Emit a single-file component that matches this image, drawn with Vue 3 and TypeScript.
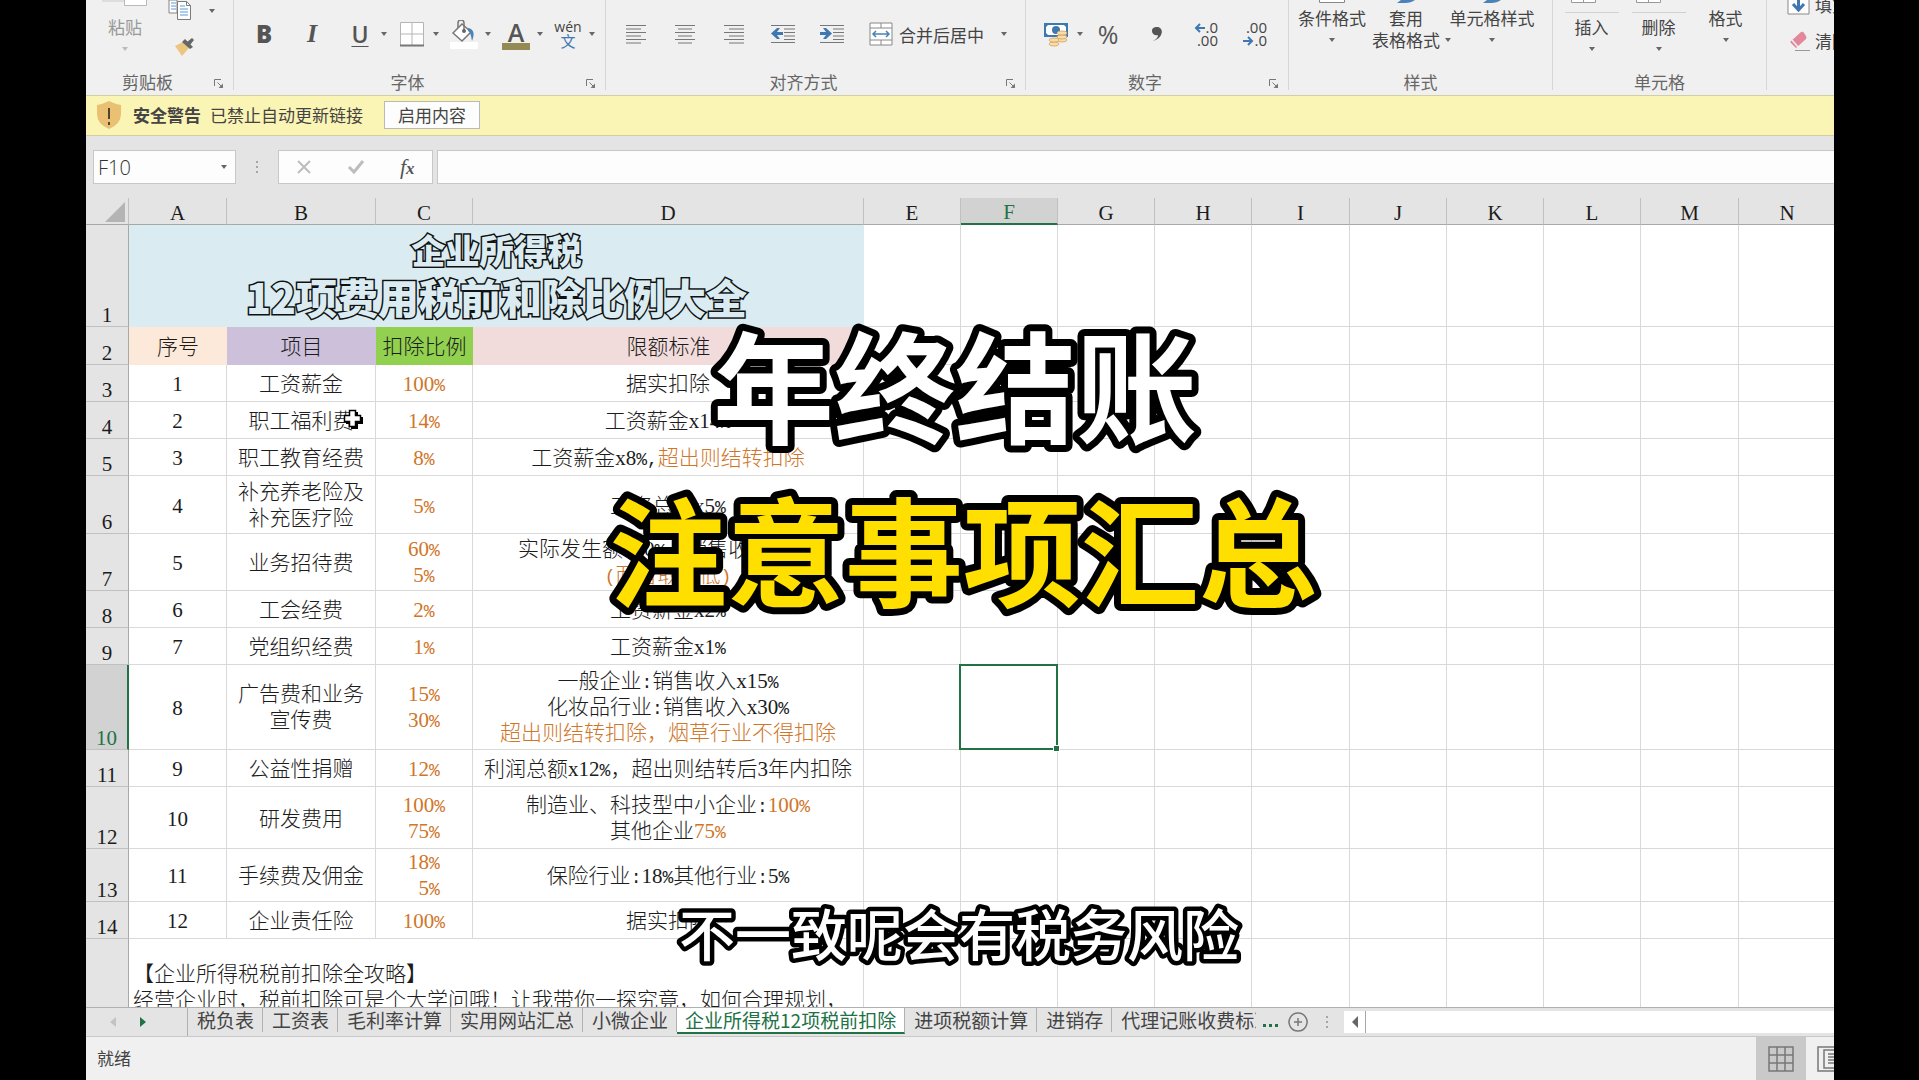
<script setup lang="ts">
import { ref } from 'vue'

interface Run { text: string; accent: boolean; half: boolean }
interface SheetRow { n: string; height: number; cells: string[] }

const columns = [
  { name: 'A', width: 98 }, { name: 'B', width: 149 }, { name: 'C', width: 97 }, { name: 'D', width: 391 },
  { name: 'E', width: 97 }, { name: 'F', width: 97 }, { name: 'G', width: 97 }, { name: 'H', width: 97 },
  { name: 'I', width: 98 }, { name: 'J', width: 97 }, { name: 'K', width: 97 }, { name: 'L', width: 97 },
  { name: 'M', width: 98 }, { name: 'N', width: 97 },
]
const freeColumns = columns.slice(4).map(c => c.name)

// Braces mark the accent-coloured part of a cell, a newline starts a new line.
const rows: SheetRow[] = [
  { n: '3', height: 37, cells: ['1', '工资薪金', '{100%}', '据实扣除'] },
  { n: '4', height: 37, cells: ['2', '职工福利费', '{14%}', '工资薪金x14%'] },
  { n: '5', height: 37, cells: ['3', '职工教育经费', '{8%}', '工资薪金x8%,{超出则结转扣除}'] },
  { n: '6', height: 58, cells: ['4', '补充养老险及\n补充医疗险', '{5%}', '工资总额x5%'] },
  { n: '7', height: 57, cells: ['5', '业务招待费', '{60%}\n{5%}', '实际发生额x60%，销售收入x0.5%\n{(两者取其低)}'] },
  { n: '8', height: 37, cells: ['6', '工会经费', '{2%}', '工资薪金x2%'] },
  { n: '9', height: 37, cells: ['7', '党组织经费', '{1%}', '工资薪金x1%'] },
  { n: '10', height: 85, cells: ['8', '广告费和业务\n宣传费', '{15%}\n{30%}', '一般企业:销售收入x15%\n化妆品行业:销售收入x30%\n{超出则结转扣除，烟草行业不得扣除}'] },
  { n: '11', height: 37, cells: ['9', '公益性捐赠', '{12%}', '利润总额x12%，超出则结转后3年内扣除'] },
  { n: '12', height: 62, cells: ['10', '研发费用', '{100%}\n{75%}', '制造业、科技型中小企业:{100%}\n其他企业{75%}'] },
  { n: '13', height: 53, cells: ['11', '手续费及佣金', '{18%}\n{\u20025%}', '保险行业:18%其他行业:5%'] },
  { n: '14', height: 37, cells: ['12', '企业责任险', '{100%}', '据实扣除'] },
]

function parse(cell: string): Run[][] {
  return cell.split('\n').map(line => {
    let accent = false
    const runs: Run[] = []
    for (const part of line.split(/([{}]|[%:,()]+)/)) {
      if (part === '{') accent = true
      else if (part === '}') accent = false
      else if (part) runs.push({ text: part, accent, half: /^[%:,()]/.test(part) })
    }
    return runs
  })
}

const tabs = ['税负表', '工资表', '毛利率计算', '实用网站汇总', '小微企业', '企业所得税12项税前扣除', '进项税额计算', '进销存', '代理记账收费标准']
const activeTab = ref('企业所得税12项税前扣除')
const cellName = ref('F10')
const formula = ref('')
</script>

<template>
  <div class="stage">
    <div class="app">
      <header class="ribbon">
        <section class="group clipboard">
          <div class="body">
            <button class="big paste">
              <svg class="stub" width="46" height="7" viewBox="0 0 46 7"><path d="M0 0H22V2H0z" fill="#ddd" /><path d="M22.500 0V5.500H44.500V0" fill="#fff" stroke="#b9b9b9" /></svg>
              <span class="low">粘贴</span><i class="caret"></i>
            </button>
            <div class="stack">
              <button class="mini" aria-label="复制">
                <svg width="24" height="22" viewBox="0 0 24 22"><path d="M1 0V13H9V0z" fill="#fff" stroke="#858585" /><path d="M3 3h5M3 6h5M3 9h5" stroke="#5b9bd5" /><path d="M9.500 1.500h9l4 4v14h-13z" fill="#fff" stroke="#7b7b7b" /><path d="M18.500 1.500v4h4" fill="none" stroke="#7b7b7b" /><path d="M12 6h5M12 9h8M12 12h8M12 15h8" stroke="#5b9bd5" /></svg>
                <i class="caret"></i>
              </button>
              <button class="mini brush" aria-label="格式刷">
                <svg width="22" height="20" viewBox="0 0 22 20"><path d="M2 9l8-4 6 6-7 8z" fill="#ebc67f" /><path d="M9 5l3-3 8 8-3 2z" fill="#666" /><path d="M14 5l5-4 2 2-4 5z" fill="#666" /></svg>
              </button>
            </div>
          </div>
          <footer><span>剪贴板</span><button class="launch" aria-label="剪贴板设置"><svg width="10" height="10" viewBox="0 0 10 10"><path d="M.5 7V.5H7M3.500 3.500L8 8" fill="none" stroke="#777" /><path d="M9 4.500V9H4.500z" fill="#777" /></svg></button></footer>
        </section>
        <section class="group font">
          <div class="body">
            <button class="tool wide"><b class="glyph">B</b></button>
            <button class="tool wide"><em class="glyph">I</em></button>
            <button class="split"><span class="pic"><u class="glyph">U</u></span><i class="caret"></i></button>
            <button class="split" aria-label="边框"><span class="pic"><svg width="24" height="25" viewBox="0 0 24 25"><path d="M.5.5h23v23H.5zM12 0v24M0 12h24" fill="#fff" stroke="#b5b5b5" /><path d="M0 23.500h24" stroke="#777" stroke-width="2" /></svg></span><i class="caret"></i></button>
            <button class="split" aria-label="填充颜色"><span class="pic"><svg width="30" height="29" viewBox="0 0 30 29"><path d="M1 22h28v7H1z" fill="#fff" /><path d="M4 13L13 4l9 8-9 9z" fill="#fff" stroke="#777" stroke-width="1.500" /><path d="M9 8V3a3 3 0 0 1 6 0v8" fill="none" stroke="#777" stroke-width="1.500" /><circle cx="15" cy="11" r="2" fill="#666" /><path d="M19 8c6 1 7 6 4 13-1-5-1-8-4-10z" fill="#4a83b8" /></svg></span><i class="caret"></i></button>
            <button class="split"><span class="pic color"><span>A</span></span><i class="caret"></i></button>
            <button class="split"><span class="pic pinyin"><span>wén</span><span class="zh">文</span></span><i class="caret"></i></button>
          </div>
          <footer><span>字体</span><button class="launch" aria-label="字体设置"><svg width="10" height="10" viewBox="0 0 10 10"><path d="M.5 7V.5H7M3.500 3.500L8 8" fill="none" stroke="#777" /><path d="M9 4.500V9H4.500z" fill="#777" /></svg></button></footer>
        </section>
        <section class="group align">
          <div class="body">
            <button class="tool" aria-label="左对齐"><svg width="20" height="20" viewBox="0 0 20 20"><path d="M0 1.500h20M0 5h15M0 8.500h20M0 12h15M0 15.500h20M0 19h15" stroke="#777" /></svg></button>
            <button class="tool" aria-label="居中"><svg width="20" height="20" viewBox="0 0 20 20"><path d="M0 1.500h20M3 5h14M0 8.500h20M3 12h14M0 15.500h20M3 19h14" stroke="#777" /></svg></button>
            <button class="tool" aria-label="右对齐"><svg width="20" height="20" viewBox="0 0 20 20"><path d="M0 1.500h20M5 5h15M0 8.500h20M5 12h15M0 15.500h20M5 19h15" stroke="#777" /></svg></button>
            <button class="tool" aria-label="减少缩进"><svg width="24" height="20" viewBox="0 0 24 20"><path d="M0 1.500h24M13 5h11M13 8.500h11M13 12h11M13 15.500h11M0 18.500h24" stroke="#777" /><path d="M6 4h3L6 8h6v3H6l3 4H6L0 9.500z" fill="#3f78b0" /></svg></button>
            <button class="tool" aria-label="增加缩进"><svg width="24" height="20" viewBox="0 0 24 20"><path d="M0 1.500h24M13 5h11M13 8.500h11M13 12h11M13 15.500h11M0 18.500h24" stroke="#777" /><path d="M6 4H3l3 4H0v3h6l-3 4h3l6-5.500z" fill="#3f78b0" /></svg></button>
            <button class="merge"><svg width="24" height="24" viewBox="0 0 24 24"><path d="M1 1h22v22H1z" fill="#fff" stroke="#888" /><path d="M1 6h22M1 18h22M12 1v5M12 18v5" stroke="#888" /><path d="M4 12h16M7 9l-3 3 3 3M17 9l3 3-3 3" fill="none" stroke="#4a83b8" stroke-width="1.500" /></svg><span>合并后居中</span><i class="caret"></i></button>
          </div>
          <footer><span>对齐方式</span><button class="launch" aria-label="对齐设置"><svg width="10" height="10" viewBox="0 0 10 10"><path d="M.5 7V.5H7M3.500 3.500L8 8" fill="none" stroke="#777" /><path d="M9 4.500V9H4.500z" fill="#777" /></svg></button></footer>
        </section>
        <section class="group number">
          <div class="body">
            <button class="split" aria-label="会计数字格式"><span class="pic"><svg width="24" height="25" viewBox="0 0 24 25"><path d="M1 2h22v12H1z" fill="#fff" stroke="#3f78b0" stroke-width="2" /><path d="M1 2h4L1 6zM23 2v4l-4-4zM1 14v-4l4 4z" fill="#3f78b0" /><circle cx="12" cy="8" r="4" fill="#3f78b0" /><g fill="#f7dcae" stroke="#dcae68"><ellipse cx="18" cy="18" rx="5" ry="2" /><ellipse cx="18" cy="15" rx="5" ry="2" /><ellipse cx="18" cy="11" rx="5" ry="2" /><ellipse cx="10" cy="22" rx="5" ry="2" /><ellipse cx="10" cy="18" rx="5" ry="2" /></g></svg></span><i class="caret"></i></button>
            <button class="tool percent">%</button>
            <button class="tool" aria-label="千位分隔样式"><svg width="12" height="16" viewBox="0 0 12 16"><path d="M2 15c4-2 5-4 5-6-3 1-6-1-6-4s2-4 5-4c7 0 7 11-4 14z" fill="#555" /></svg></button>
            <button class="tool decimals"><span><svg width="11" height="10" viewBox="0 0 11 10"><path d="M11 5H2M6 1L2 5l4 4" fill="none" stroke="#3f78b0" stroke-width="2" /></svg>.0</span><span>.00</span></button>
            <button class="tool decimals"><span>.00</span><span><svg width="11" height="10" viewBox="0 0 11 10"><path d="M0 5h9M5 1l4 4-4 4" fill="none" stroke="#3f78b0" stroke-width="2" /></svg>.0</span></button>
          </div>
          <footer><span>数字</span><button class="launch" aria-label="数字设置"><svg width="10" height="10" viewBox="0 0 10 10"><path d="M.5 7V.5H7M3.500 3.500L8 8" fill="none" stroke="#777" /><path d="M9 4.500V9H4.500z" fill="#777" /></svg></button></footer>
        </section>
        <section class="group styles">
          <div class="body">
            <button class="big"><svg class="stub" width="26" height="7" viewBox="0 0 26 7"><path d="M.5 0v2.500h25V0" fill="#fff" stroke="#888" /></svg><span>条件格式</span><i class="caret"></i></button>
            <button class="big"><svg class="stub" width="22" height="7" viewBox="0 0 22 7"><path d="M2 3l4-3h14q-4 3-10 3z" fill="#4a83b8" /></svg><span>套用</span><span class="inline">表格格式<i class="caret"></i></span></button>
            <button class="big"><svg class="stub" width="22" height="7" viewBox="0 0 22 7"><path d="M2 3l4-3h14q-4 3-10 3z" fill="#4a83b8" /></svg><span>单元格样式</span><i class="caret"></i></button>
          </div>
          <footer><span>样式</span></footer>
        </section>
        <section class="group cellsgroup">
          <div class="body">
            <button class="big"><svg class="stub" width="56" height="7" viewBox="0 0 56 7"><path d="M7.500 0v2.500h24V0M19.500 0v2" fill="#fff" stroke="#999" /></svg><span class="low ruled">插入</span><i class="caret"></i></button>
            <button class="big"><svg class="stub" width="56" height="7" viewBox="0 0 56 7"><path d="M5.500 0v2.500h24V0M17.500 0v2" fill="#fff" stroke="#999" /></svg><span class="low ruled">删除</span><i class="caret"></i></button>
            <button class="big"><span class="stub"></span><span>格式</span><i class="caret"></i></button>
          </div>
          <footer><span>单元格</span></footer>
        </section>
        <section class="group editing">
          <button class="row"><svg width="24" height="22" viewBox="0 0 24 22"><path d="M1 -2h21v22H1z" fill="#fff" stroke="#888" /><path d="M11.500 4v12M6 10l5.500 6 5.500-6" fill="none" stroke="#3f78b0" stroke-width="3" /></svg>填充</button>
          <button class="row"><svg width="24" height="22" viewBox="0 0 24 22"><path d="M3 12L14 2q2-1 3 1l2 3q1 1 0 3L9 18z" fill="#e2889b" /><path d="M5 10l6 7" stroke="#f0f0f0" stroke-width="1.500" /><path d="M8 20.500h15" stroke="#999" /></svg>清除</button>
        </section>
      </header>

      <div class="warning" role="alert">
        <svg width="26" height="30" viewBox="0 0 26 30"><path d="M13 1q6 3 12 4v9q0 10-12 15Q1 24 1 14V5q6-1 12-4z" fill="#eac073" /><path d="M13 8v11M13 22v3" stroke="#4d4534" stroke-width="2" /></svg>
        <strong>安全警告</strong>
        <span>已禁止自动更新链接</span>
        <button>启用内容</button>
      </div>

      <div class="formula">
        <label class="name"><input v-model="cellName" aria-label="名称框"><i class="caret"></i></label>
        <span class="dots"><i></i><i></i><i></i></span>
        <div class="fx">
          <button aria-label="取消"><svg width="16" height="16" viewBox="0 0 16 16"><path d="M2 2l12 12M14 2L2 14" stroke="#bdbdbd" stroke-width="2" /></svg></button>
          <button aria-label="输入"><svg width="18" height="16" viewBox="0 0 18 16"><path d="M2 8l5 5L16 2" fill="none" stroke="#bdbdbd" stroke-width="3" /></svg></button>
          <button class="fn"><span>f</span>x</button>
        </div>
        <input v-model="formula" class="entry" aria-label="编辑栏">
      </div>

      <main class="sheet">
        <table>
          <colgroup>
            <col class="numcol">
            <col v-for="c in columns" :key="c.name" :style="{ width: c.width + 'px' }">
          </colgroup>
          <thead>
            <tr>
              <th class="corner"><svg width="20" height="20" viewBox="0 0 20 20"><path d="M20 0v20H0z" fill="#b4b4b4" /></svg></th>
              <th v-for="c in columns" :key="c.name" :class="{ current: c.name === 'F' }">{{ c.name }}</th>
            </tr>
          </thead>
          <tbody>
            <tr class="r1">
              <th>1</th>
              <td colspan="4" class="title"><div class="small">企业所得税</div><div>12项费用税前和除比例大全</div></td>
              <td v-for="f in freeColumns" :key="f"></td>
            </tr>
            <tr class="r2">
              <th>2</th>
              <td class="h-a">序号</td><td class="h-b">项目</td><td class="h-c">扣除比例</td><td class="h-d">限额标准</td>
              <td v-for="f in freeColumns" :key="f"></td>
            </tr>
            <tr v-for="r in rows" :key="r.n" :style="{ height: r.height + 'px' }">
              <th :class="{ current: r.n === '10' }">{{ r.n }}</th>
              <td v-for="(cell, i) in r.cells" :key="i">
                <div v-for="(line, j) in parse(cell)" :key="j" class="line"><span v-for="(run, k) in line" :key="k" :class="{ accent: run.accent, half: run.half }">{{ run.text }}</span></div>
                <svg v-if="r.n === '4' && i === 1" class="pointer" width="20" height="22" viewBox="0 0 20 22"><path d="M8 3h7v5h5v7h-5v5H8v-5H3V8h5z" fill="#000" /><path d="M6.500 1.500h6v5h5v6h-5v5h-6v-5h-5v-6h5z" fill="#fff" stroke="#000" stroke-width="1.500" /></svg>
              </td>
              <td v-for="f in freeColumns" :key="f" :class="{ selected: r.n === '10' && f === 'F' }"></td>
            </tr>
            <tr class="r15">
              <th></th>
              <td colspan="4" class="note"><div class="line">【企业所得税税前扣除全攻略】</div><div class="line">经营企业时，税前扣除可是个大学问哦！让我带你一探究竟，如何合理规划，</div></td>
              <td v-for="f in freeColumns" :key="f"></td>
            </tr>
          </tbody>
        </table>
      </main>

      <nav class="tabs">
        <div class="arrows">
          <button aria-label="上一个"><svg width="8" height="12" viewBox="0 0 8 12"><path d="M7 1v10L1 6z" fill="#c3c3c3" /></svg></button>
          <button aria-label="下一个"><svg width="8" height="12" viewBox="0 0 8 12"><path d="M1 1v10l6-5z" fill="#217346" /></svg></button>
        </div>
        <div class="list">
          <button v-for="t in tabs" :key="t" :class="{ active: t === activeTab }" @click="activeTab = t">{{ t }}</button>
        </div>
        <span class="more"><i></i><i></i><i></i></span>
        <button class="add" aria-label="新工作表"><svg width="20" height="20" viewBox="0 0 20 20"><path d="M10 1a9 9 0 1 0 .1 0zM10 6v8M6 10h8" fill="none" stroke="#777" stroke-width="1.500" /></svg></button>
        <span class="dots"><i></i><i></i><i></i></span>
        <div class="scroll"><button aria-label="向左滚动"><svg width="8" height="12" viewBox="0 0 8 12"><path d="M7 0v12L1 6z" fill="#666" /></svg></button></div>
      </nav>

      <footer class="status">
        <span>就绪</span>
        <div class="views">
          <button class="on" aria-label="普通"><svg width="26" height="26" viewBox="0 0 26 26"><path d="M1 1h24v24H1zM9 1v24M17 1v24M1 9h24M1 17h24" fill="none" stroke="#777" stroke-width="1.500" /></svg></button>
          <button aria-label="页面布局"><svg width="28" height="26" viewBox="0 0 28 26"><path d="M1 1h26v24H1zM7 4h18v18H7zM11 8h14M11 11h14M11 14h14M11 17h14" fill="none" stroke="#777" stroke-width="1.500" /></svg></button>
        </div>
      </footer>
    </div>

    <svg class="captions" width="100%" height="100%">
      <text x="955" y="434" class="headline">年终结账</text>
      <text x="963" y="598" class="headline gold">注意事项汇总</text>
      <text x="959" y="956" class="subtitle">不一致呢会有税务风险</text>
    </svg>
  </div>
</template>

<style>
body { background: #000; overflow: hidden; }
</style>

<style scoped>
.stage { position: relative; box-sizing: border-box; height: 100vh; padding: 0 85px 0 86px; background: #000; font-family: "Noto Sans CJK SC", sans-serif; font-size: 17px; color: #444; }
.app { display: flex; flex-direction: column; height: 100%; overflow: hidden; background: #f0f0f0; }
button { margin: 0; padding: 0; border: 0; background: none; color: inherit; font: inherit; white-space: nowrap; }
svg { display: block; flex: none; }
.caret { flex: none; width: 0; height: 0; border: 3px solid transparent; border-top: 4px solid #666; border-bottom: 0; margin: 0 5px; }

.ribbon { display: flex; flex: none; height: 95px; overflow: hidden; }
.group { position: relative; box-sizing: border-box; display: flex; flex: none; flex-direction: column; height: 90px; border-right: 1px solid #d6d6d6; }
.body { display: flex; flex: none; align-items: center; height: 68px; }
.group footer { display: flex; flex: none; justify-content: center; height: 27px; line-height: 27px; color: #666; }
.launch { position: absolute; right: 9px; bottom: 1px; }
.clipboard { width: 148px; }
.clipboard footer { padding-right: 24px; }
.font { width: 372px; }
.font footer { padding-right: 24px; }
.align { width: 420px; }
.align footer { padding-right: 24px; }
.number { width: 263px; }
.number footer { padding-right: 24px; }
.styles { width: 264px; }
.cellsgroup { width: 214px; }
.editing { border: 0; padding-left: 20px; }

.big { display: flex; flex: none; flex-direction: column; align-items: center; align-self: flex-start; line-height: 22px; }
.big .stub { height: 7px; }
.big > .caret { margin-top: 9px; }
.big .low { margin-top: 9px; }
.big .ruled { position: relative; }
.big .ruled::before { content: ""; position: absolute; top: -4px; left: -10px; right: -10px; border-top: 1px solid #d0d0d0; }
.inline { display: flex; align-items: center; margin-right: -16px; }
.paste { width: 78px; color: #999; }
.paste .caret { border-top-color: #bbb; }
.styles .big { width: 80px; }
.styles .big:nth-child(2) { width: 68px; }
.styles .big:last-child { width: 104px; }
.styles .body { padding-left: 3px; }
.cellsgroup .body { padding-left: 5px; }
.cellsgroup .big { width: 67px; }
.stack { display: flex; flex-direction: column; align-items: flex-start; align-self: flex-start; padding-left: 4px; gap: 15px; }
.mini { display: flex; align-items: center; gap: 12px; }
.mini.brush { padding-left: 5px; }
.row { display: flex; align-items: center; gap: 4px; height: 33px; line-height: 32px; }
.row:first-child { height: 24px; margin-top: -7px; margin-bottom: 7px; }

.tool { display: flex; flex: none; align-items: center; justify-content: center; width: 32px; height: 40px; }
.wide { margin-right: 16px; }
.split { display: flex; flex: none; align-items: center; width: 48px; height: 40px; margin-right: 4px; }
.pic { display: flex; align-items: center; justify-content: center; width: 32px; }
.font .body { padding-left: 14px; }
.align .body { padding-left: 14px; gap: 17px; }
.number .body { padding-left: 14px; }
.number .tool { margin-right: 17px; }
.glyph { font-family: "Open Sans", sans-serif; font-size: 24px; line-height: 32px; color: #555; }
b.glyph { font-weight: 800; }
em.glyph { font-family: "Liberation Serif", serif; font-weight: 700; font-size: 26px; }
u.glyph { font-weight: 600; font-size: 23px; text-decoration-thickness: 1px; text-underline-offset: 3px; }
.color span { width: 28px; margin-top: 3px; border-bottom: 7px solid #948a54; font: 600 25px/22px "Open Sans", sans-serif; text-align: center; color: #555; }
.pinyin { flex-direction: column; font: 14px/13px "Open Sans", sans-serif; }
.pinyin .zh { font: 15px/15px "Noto Sans CJK SC", sans-serif; color: #3f78b0; }
.merge { display: flex; align-items: center; gap: 6px; padding-left: 4px; }
.merge .caret { margin-left: 11px; }
.percent { font: 25px/30px "Open Sans", sans-serif; color: #555; }
.decimals { flex-direction: column; font: 15px/13px "Open Sans", sans-serif; align-items: flex-end; padding-right: 4px; box-sizing: border-box; }
.decimals span { display: flex; align-items: center; }

.warning { display: flex; flex: none; align-items: center; box-sizing: border-box; height: 41px; padding: 0 0 2px 10px; border: solid #d3cfa5; border-width: 1px 0; background: #fbf5b5; color: #444; }
.warning strong { margin: 0 9px 0 11px; }
.warning button { box-sizing: border-box; width: 96px; height: 28px; margin-left: 21px; border: 1px solid #b9b9b9; background: #fdfdfd; line-height: 25px; }

.formula { display: flex; flex: none; align-items: stretch; box-sizing: border-box; height: 62px; padding: 14px 0 14px 7px; background: #e4e4e4; }
.formula input { min-width: 0; border: 0; padding: 0; background: none; outline: 0; font: 300 20px "Open Sans", sans-serif; color: #333; }
.name { display: flex; align-items: center; box-sizing: border-box; width: 143px; padding: 0 3px 0 4px; border: 1px solid #c8c8c8; background: #fdfdfd; }
.name input { flex: 1; }
.dots { display: flex; flex-direction: column; align-items: center; justify-content: center; gap: 3px; width: 42px; }
.dots i { width: 2px; height: 2px; background: #a5a5a5; }
.fx { display: flex; align-items: center; justify-content: space-around; box-sizing: border-box; width: 155px; border: 1px solid #c8c8c8; background: #fdfdfd; }
.fn { font: italic 700 17px "Liberation Serif", serif; color: #555; }
.fn span { font-size: 22px; font-weight: 400; }
.formula .entry { flex: 1; margin-left: 4px; border: 1px solid #c8c8c8; border-right: 0; background: #fdfdfd; }

.sheet { flex: 1; min-height: 0; overflow: hidden; background: #fff; }
table { table-layout: fixed; width: 1750px; border-collapse: separate; border-spacing: 0; font: 300 21px/26px "Liberation Serif", "Noto Sans CJK SC", serif; color: #1c1c1c; text-spacing-trim: space-all; }
.numcol { width: 43px; }
th, td { box-sizing: border-box; padding: 0; border: solid #d9d9d9; border-width: 0 1px 1px 0; white-space: pre; text-align: center; vertical-align: middle; position: relative; }
th { background: #e4e4e4; font-weight: 400; }
thead th { height: 27px; line-height: 22px; border-color: #a8a8a8; border-right-color: #c0c0c0; vertical-align: bottom; }
thead th.current { background: #d2d2d2; border-bottom: 2px solid #217346; color: #217346; }
.corner svg { margin: 0 3px 2px auto; }
tbody th { vertical-align: bottom; line-height: 22px; border-color: #c0c0c0; border-right-color: #a8a8a8; }
tbody th.current { background: #d2d2d2; border-right: 2px solid #217346; color: #217346; }
.line { height: 26px; }
.line:only-of-type, .r2 td { padding-top: 2px; }
.r1 { height: 102px; }
.r2 { height: 38px; }
.r15 { height: 92px; }
.title { padding-bottom: 6px; border: 0; background: #daecf1; font: 900 41px/46px "Noto Sans CJK SC", sans-serif; color: #daecf1; -webkit-text-stroke: 3px #111; paint-order: stroke fill; }
.title .small { font-size: 34px; }
.h-a, .h-b, .h-c, .h-d { border: 0; }
.h-a { background: #fde9d9; }
.h-b { background: #ccc0da; }
.h-c { background: #92d050; }
.h-d { background: #f2dcdb; }
.accent { color: #cf7629; }
.half { font-family: "Liberation Mono", monospace; font-size: 18px; line-height: 18px; }
.pointer { position: absolute; left: 116px; top: 7px; }
.selected::after { content: ""; position: absolute; inset: -1px -1px -1px -2px; border: 2px solid #217346; }
.selected::before { content: ""; position: absolute; z-index: 1; right: -3px; bottom: -3px; width: 5px; height: 5px; border: 1px solid #fff; background: #217346; }
.note { padding: 22px 0 0 4px; text-align: left; vertical-align: top; }

.tabs { display: flex; flex: none; box-sizing: border-box; height: 30px; border: solid #b0b0b0; border-width: 1px 0; border-bottom-color: #c8c8c8; background: #e4e4e4; }
.arrows { display: flex; align-items: center; gap: 22px; box-sizing: border-box; width: 102px; padding-left: 23px; border-right: 1px solid #b0b0b0; }
.list { display: flex; flex: none; width: 1068px; overflow: hidden; }
.list button { flex: none; height: 24px; padding: 0 8px 0 9px; border-right: 1px solid #b0b0b0; font-size: 19px; line-height: 20px; }
.list .active { height: 26px; padding: 0 8px; border-bottom: 2px solid #217346; background: #fff; color: #217346; }
.more { display: flex; align-items: center; gap: 3px; width: 30px; padding: 6px 0 0 7px; box-sizing: border-box; }
.more i { width: 3px; height: 3px; background: #217346; }
.add { display: flex; align-items: center; width: 24px; padding-left: 2px; }
.tabs .dots { width: 34px; }
.scroll { display: flex; flex: 1; margin: 3px 0; background: #fff; }
.scroll button { display: flex; align-items: center; justify-content: center; width: 22px; border-right: 1px solid #a8a8a8; }

.status { display: flex; flex: none; justify-content: space-between; height: 43px; padding-left: 11px; line-height: 42px; }
.views { display: flex; width: 78px; overflow: hidden; }
.views button { display: flex; flex: none; align-items: center; justify-content: center; width: 50px; }
.views .on { background: #c9c9c9; }

.captions { position: absolute; inset: 0; pointer-events: none; }
.captions text { text-anchor: middle; paint-order: stroke fill; stroke: #000; stroke-linejoin: round; fill: #fff; }
.headline { font-size: 121px; font-weight: 700; stroke-width: 14px; }
.captions .gold { font-size: 118px; fill: #ffdf00; }
.subtitle { font-size: 56px; font-weight: 500; stroke-width: 9px; }
</style>
